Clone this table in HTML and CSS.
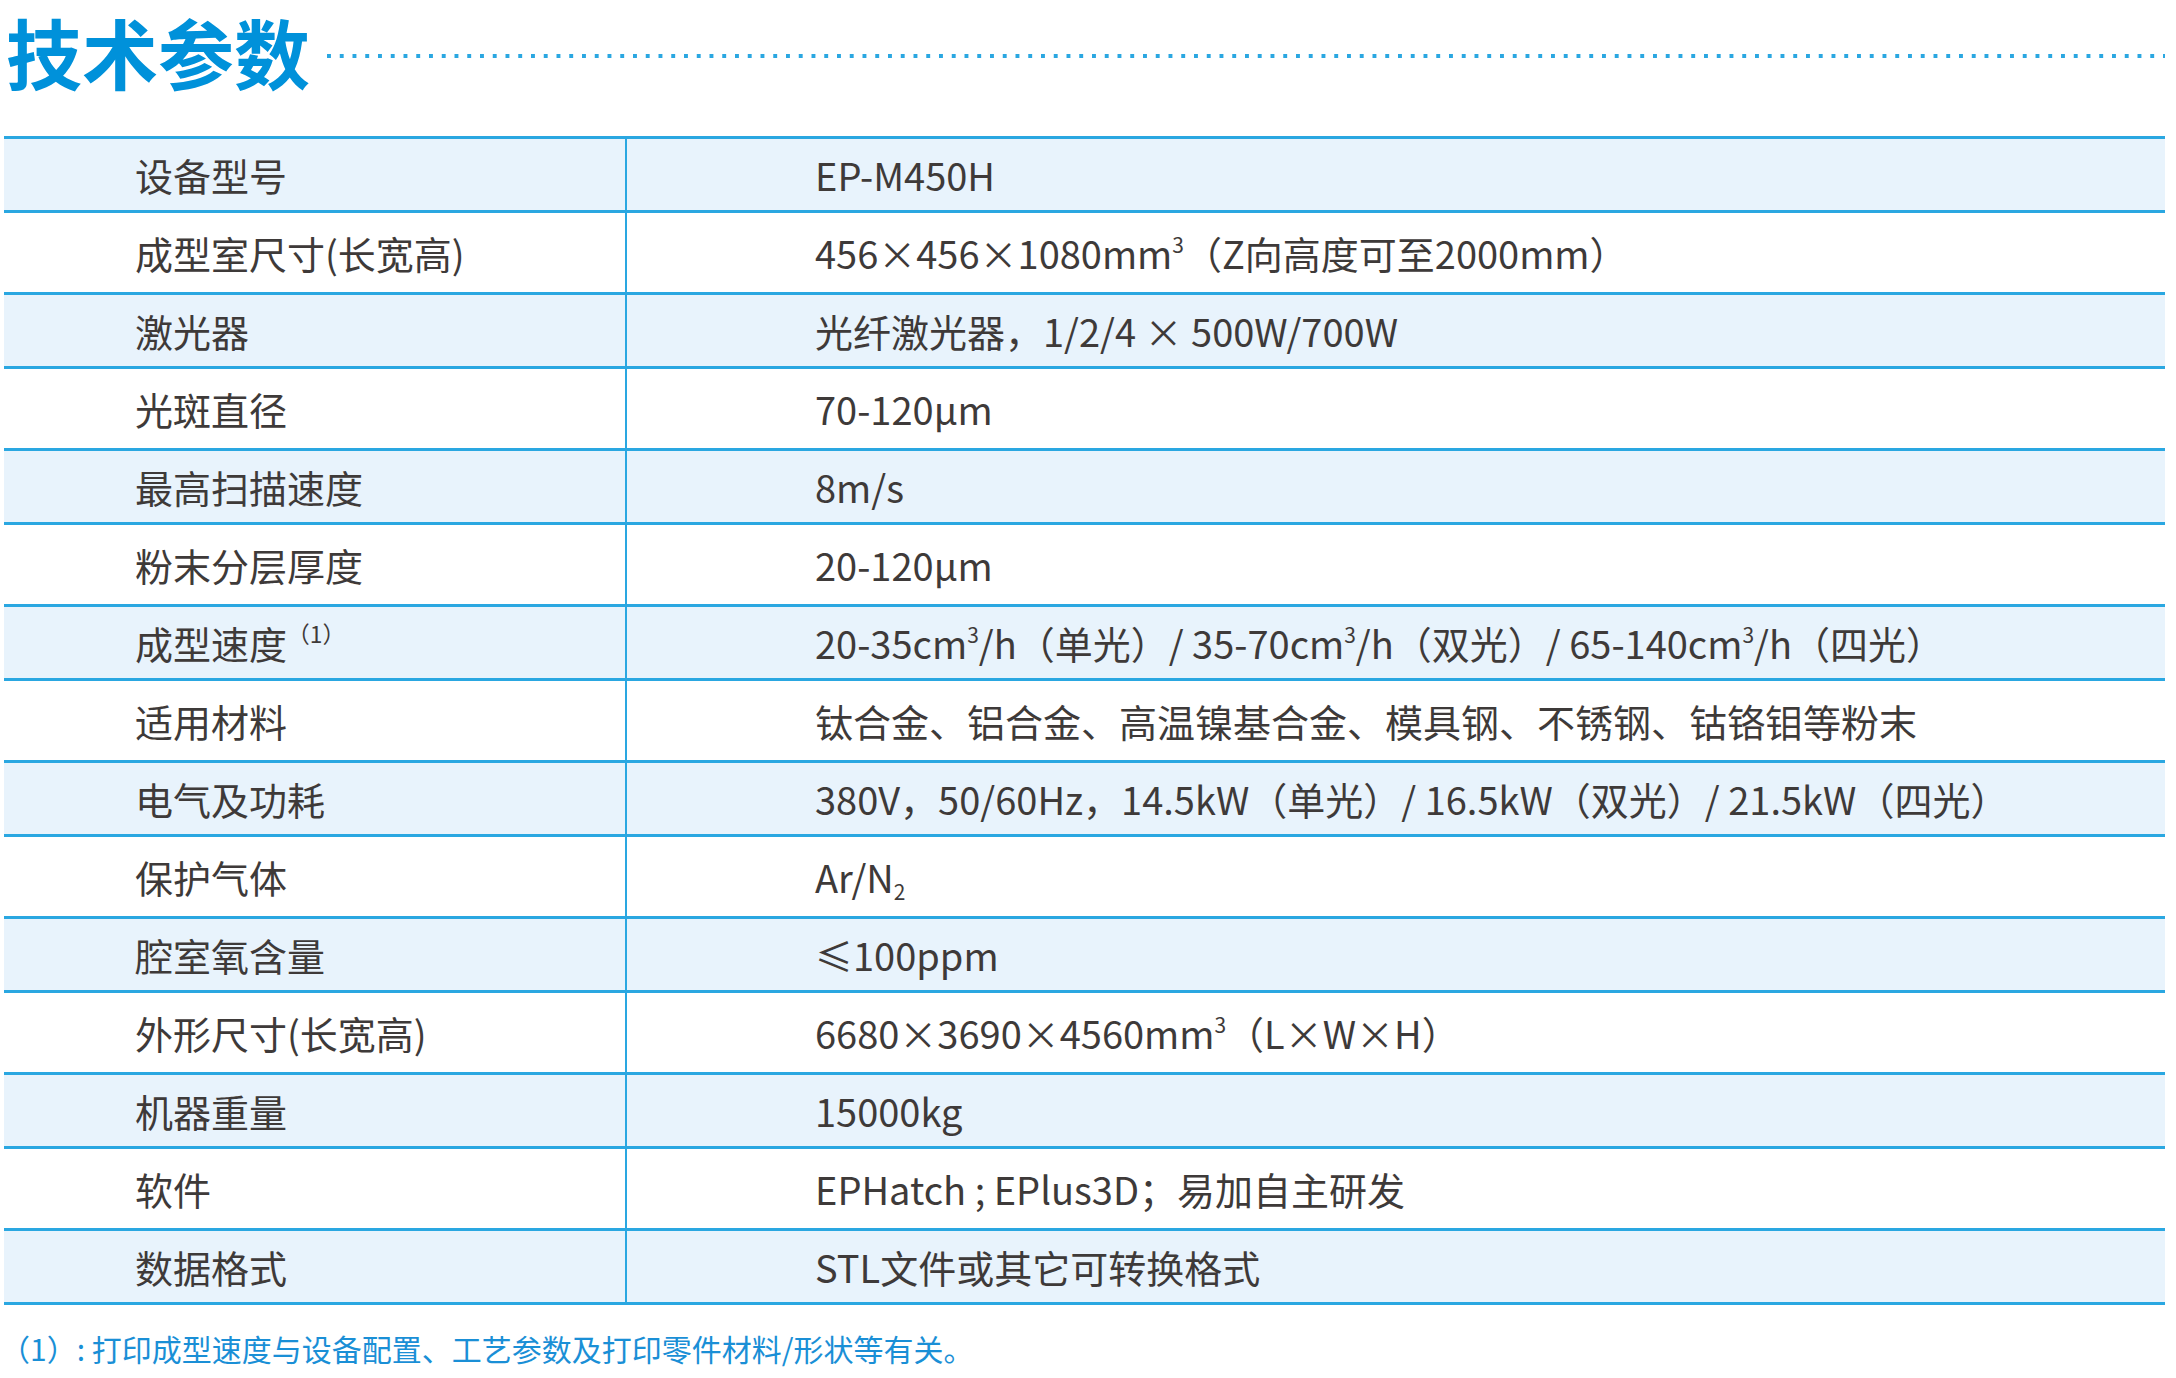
FILE: index.html
```html
<!DOCTYPE html>
<html lang="zh-CN">
<head>
<meta charset="utf-8">
<title>技术参数</title>
<link rel="stylesheet" href="styles.css">
</head>
<body>
<div class="page">
  <header class="head">
    <h1 class="title">技术参数</h1>
    <div class="dots"></div>
  </header>
  <table class="spec">
    <tr class="shade"><td class="k">设备型号</td><td class="v">EP-M450H</td></tr>
    <tr class="plain"><td class="k">成型室尺寸(长宽高)</td><td class="v">456×456×1080mm<sup>3</sup>（Z向高度可至2000mm）</td></tr>
    <tr class="shade"><td class="k">激光器</td><td class="v">光纤激光器，1/2/4 × 500W/700W</td></tr>
    <tr class="plain"><td class="k">光斑直径</td><td class="v">70-120μm</td></tr>
    <tr class="shade"><td class="k">最高扫描速度</td><td class="v">8m/s</td></tr>
    <tr class="plain"><td class="k">粉末分层厚度</td><td class="v">20-120μm</td></tr>
    <tr class="shade"><td class="k">成型速度<sup class="note">（1）</sup></td><td class="v">20-35cm<sup>3</sup>/h（单光）/ 35-70cm<sup>3</sup>/h（双光）/ 65-140cm<sup>3</sup>/h（四光）</td></tr>
    <tr class="plain"><td class="k">适用材料</td><td class="v">钛合金、铝合金、高温镍基合金、模具钢、不锈钢、钴铬钼等粉末</td></tr>
    <tr class="shade"><td class="k">电气及功耗</td><td class="v">380V，50/60Hz，14.5kW（单光）/ 16.5kW（双光）/ 21.5kW（四光）</td></tr>
    <tr class="plain"><td class="k">保护气体</td><td class="v">Ar/N<sub>2</sub></td></tr>
    <tr class="shade"><td class="k">腔室氧含量</td><td class="v">≤100ppm</td></tr>
    <tr class="plain"><td class="k">外形尺寸(长宽高)</td><td class="v">6680×3690×4560mm<sup>3</sup>（L×W×H）</td></tr>
    <tr class="shade"><td class="k">机器重量</td><td class="v">15000kg</td></tr>
    <tr class="plain"><td class="k">软件</td><td class="v">EPHatch ; EPlus3D；易加自主研发</td></tr>
    <tr class="shade"><td class="k">数据格式</td><td class="v">STL文件或其它可转换格式</td></tr>
  </table>
  <p class="foot">（1）: 打印成型速度与设备配置、工艺参数及打印零件材料/形状等有关。</p>
</div>
</body>
</html>
```

FILE: styles.css
```css
html, body {
  margin: 0;
  padding: 0;
  background: #ffffff;
}
body {
  font-family: "Noto Sans CJK SC", "Noto Sans", sans-serif;
  color: #3e3a39;
}
.page {
  width: 2176px;
  height: 1378px;
  padding: 0 11px 0 4px;
  box-sizing: border-box;
}
.head {
  display: flex;
  align-items: center;
  height: 102px;
  margin-bottom: 34px;
}
.title {
  margin: 0 0 0 2px;
  font-size: 76px;
  font-weight: 700;
  line-height: 1;
  color: #0091da;
  white-space: nowrap;
}
.dots {
  flex: 1;
  height: 4px;
  margin-left: 17px;
  margin-top: 10px;
  background-image: linear-gradient(to right, #2aa7e1 0 4px, transparent 4px 12.75px);
  background-size: 12.75px 4px;
  background-repeat: repeat-x;
}
.spec {
  width: 100%;
  border-collapse: collapse;
  font-size: 38px;
}
.spec td {
  border-top: 3px solid #2aa7e1;
  border-bottom: 3px solid #2aa7e1;
  padding: 0;
  vertical-align: middle;
  line-height: 1.2;
  white-space: nowrap;
}
.spec tr.shade { height: 74px; background: #e8f3fc; }
.spec tr.plain { height: 82px; background: #ffffff; }
.spec td.k {
  width: 622px;
  padding-left: 131px;
  box-sizing: border-box;
  border-right: 2px solid #2aa7e1;
}
.spec td.v {
  padding-left: 188px;
}
.spec sup {
  font-size: 0.55em;
  line-height: 0;
  vertical-align: 0.75em;
}
.spec sup.note {
  font-size: 0.6em;
  vertical-align: 0.7em;
}
.spec sub {
  font-size: 0.55em;
  line-height: 0;
  vertical-align: -0.35em;
}
.foot {
  margin: 22px 0 0 -4px;
  font-size: 30px;
  color: #1a8fd6;
  line-height: 1.4;
  white-space: nowrap;
}
```
